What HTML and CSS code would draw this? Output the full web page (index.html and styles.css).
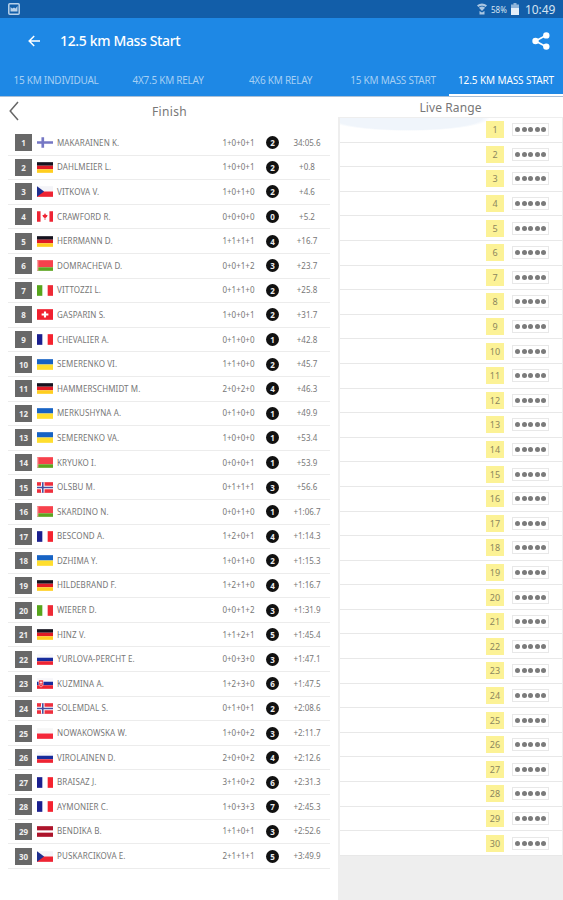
FILE: index.html
```html
<!doctype html>
<html lang="en">
<head>
	<meta charset="utf-8" />
	<title>12.5 km Mass Start</title>
	<link rel="stylesheet" href="styles.css">
</head>
<body>
	<!-- flags -->
	<svg class="defs" width="0" height="0">
		<symbol id="fin" viewBox="0 0 18 12"><path fill="#fff" d="M0 0h18v12H0z"/><path fill="#7577c4" d="M0 4.600h18v2.800H0zM5 0h3v12H5z"/></symbol>
		<symbol id="ger" viewBox="0 0 18 12"><path fill="#15131f" d="M0 0h18v4H0z"/><path fill="#e01b25" d="M0 4h18v4H0z"/><path fill="#ffce1f" d="M0 8h18v4H0z"/></symbol>
		<symbol id="cze" viewBox="0 0 18 12"><path fill="#f4f4f8" d="M0 0h18v6H0z"/><path fill="#ee2433" d="M0 6h18v6H0z"/><path fill="#1f2f8f" d="M0 0l8 6-8 6z"/></symbol>
		<symbol id="can" viewBox="0 0 18 12"><path fill="#fff" d="M0 0h18v12H0z"/><path fill="#ee2433" d="M0 0h4v12H0zM14 0h4v12h-4zM9 2l1 2 2 .5-1 2-1.600 1.200V10h-.8V7.700L7 6.500l-1-2L8 4z"/></symbol>
		<symbol id="blr" viewBox="0 0 18 12"><path fill="#f7414c" d="M0 0h18v8H0z"/><path fill="#5da520" d="M0 8h18v4H0z"/><path fill="#f8a5a5" d="M0 0h1.500v12H0z"/></symbol>
		<symbol id="ita" viewBox="0 0 18 12"><path fill="#fff" d="M0 0h18v12H0z"/><path fill="#57a51c" d="M0 0h6v12H0z"/><path fill="#ee2a36" d="M12 0h6v12h-6z"/></symbol>
		<symbol id="sui" viewBox="0 0 18 12"><path fill="#f0202f" d="M0 0h18v12H0z"/><path fill="#fff" d="M7.800 2.500h2.400v2.300h2.600v2.400h-2.600v2.300H7.800V7.200H5.200V4.800h2.600z"/></symbol>
		<symbol id="fra" viewBox="0 0 18 12"><path fill="#fff" d="M0 0h18v12H0z"/><path fill="#1a1f8f" d="M0 0h6v12H0z"/><path fill="#f5232f" d="M12 0h6v12h-6z"/></symbol>
		<symbol id="ukr" viewBox="0 0 18 12"><path fill="#1763c4" d="M0 0h18v6H0z"/><path fill="#ffde2e" d="M0 6h18v6H0z"/></symbol>
		<symbol id="nor" viewBox="0 0 18 12"><path fill="#ee2f3e" d="M0 0h18v12H0z"/><path fill="#fff" d="M0 4h18v4H0zM4.500 0h4v12h-4z"/><path fill="#434fa0" d="M0 5.100h18v1.800H0zM5.600 0h1.800v12H5.600z"/></symbol>
		<symbol id="rus" viewBox="0 0 18 12"><path fill="#f7f7fa" d="M0 0h18v4H0z"/><path fill="#172c9c" d="M0 4h18v4H0z"/><path fill="#ee2433" d="M0 8h18v4H0z"/></symbol>
		<symbol id="svk" viewBox="0 0 18 12"><path fill="#f7f7fa" d="M0 0h18v4H0z"/><path fill="#172c9c" d="M0 4h18v4H0z"/><path fill="#ee2433" d="M0 8h18v4H0z"/><path fill="#ee2433" stroke="#fff" stroke-width=".6" d="M2 2h5v4.500Q7 9 4.500 10 2 9 2 6.500z"/><path fill="#fff" d="M4.100 3h.8v5h-.8zM3 4.500h3v.8H3z"/></symbol>
		<symbol id="pol" viewBox="0 0 18 12"><path fill="#f7f7f7" d="M0 0h18v6H0z"/><path fill="#f4283a" d="M0 6h18v6H0z"/></symbol>
		<symbol id="lat" viewBox="0 0 18 12"><path fill="#ad142b" d="M0 0h18v12H0z"/><path fill="#fff" d="M0 4.700h18v2.600H0z"/></symbol>
	</svg>

	<div class="status">
		<svg class="status-pic" viewBox="0 0 12 12" width="12" height="12"><rect x=".8" y=".8" width="10.400" height="10.400" rx="1" fill="none" stroke="#b9d2ea" stroke-width="1.500"/><path fill="#b9d2ea" d="M2.500 8.500V4l1.700 1.500L6 4.500l1.500 1 2-2.500v5.500z"/></svg>
		<svg class="status-wifi" viewBox="0 0 10 12" width="10" height="12"><path fill="#a9c6e2" d="M0 2.300Q5-1.500 10 2.300L8.700 4Q5 1.400 1.300 4zM1.900 4.700Q5 2.500 8.100 4.700L5 8zM2.500 8l2.500 1.500L7.500 8v3.500h-5z"/></svg>
		<span class="status-pct">58%</span>
		<svg class="status-bat" viewBox="0 0 8 12" width="8" height="12"><path fill="#8fb5da" d="M2.500 0h3v1.500H8V5H0V1.500h2.500z"/><path fill="#e3eef8" d="M0 5h8v7H0z"/></svg>
		<span class="status-time">10:49</span>
	</div>

	<div class="bar">
		<svg viewBox="0 0 12 12" width="12" height="12"><path fill="none" stroke="#fff" stroke-width="1.500" d="M12 6H1.500M6.200 1L1.200 6l5 5"/></svg>
		<h1>12.5 km Mass Start</h1>
		<svg viewBox="0 0 18 18" width="18" height="18"><path fill="none" stroke="#fff" stroke-width="1.700" d="M14.300 3.300L3.500 9l10.800 5.700"/><circle cx="14.300" cy="3.400" r="3.200" fill="#fff"/><circle cx="3.500" cy="9" r="3.200" fill="#fff"/><circle cx="14.300" cy="14.600" r="3.200" fill="#fff"/></svg>
	</div>
	<ul class="tabs">
		<li><span>15 KM INDIVIDUAL</span></li>
		<li><span>4X7.5 KM RELAY</span></li>
		<li><span>4X6 KM RELAY</span></li>
		<li><span>15 KM MASS START</span></li>
		<li class="active"><span>12.5 KM MASS START</span></li>
	</ul>

	<div class="main">
		<div class="finish">
			<div class="finish-head">
				<svg viewBox="0 0 10 20" width="10" height="20"><path fill="none" stroke="#666" stroke-width="1.500" d="M9 1L1.200 10 9 19"/></svg>
				<h2>Finish</h2>
			</div>
			<ul id="finish-list" class="finish-list"></ul>
		</div>
		<div class="range">
			<h2>Live Range</h2>
			<ul id="range-list" class="range-list"></ul>
		</div>
	</div>

	<script type="text/javascript">
		// flag, name, shooting, time
		var results = [
			["fin", "MAKARAINEN K.", "1+0+0+1", "34:05.6"],
			["ger", "DAHLMEIER L.", "1+0+0+1", "+0.8"],
			["cze", "VITKOVA V.", "1+0+1+0", "+4.6"],
			["can", "CRAWFORD R.", "0+0+0+0", "+5.2"],
			["ger", "HERRMANN D.", "1+1+1+1", "+16.7"],
			["blr", "DOMRACHEVA D.", "0+0+1+2", "+23.7"],
			["ita", "VITTOZZI L.", "0+1+1+0", "+25.8"],
			["sui", "GASPARIN S.", "1+0+0+1", "+31.7"],
			["fra", "CHEVALIER A.", "0+1+0+0", "+42.8"],
			["ukr", "SEMERENKO VI.", "1+1+0+0", "+45.7"],
			["ger", "HAMMERSCHMIDT M.", "2+0+2+0", "+46.3"],
			["ukr", "MERKUSHYNA A.", "0+1+0+0", "+49.9"],
			["ukr", "SEMERENKO VA.", "1+0+0+0", "+53.4"],
			["blr", "KRYUKO I.", "0+0+0+1", "+53.9"],
			["nor", "OLSBU M.", "0+1+1+1", "+56.6"],
			["blr", "SKARDINO N.", "0+0+1+0", "+1:06.7"],
			["fra", "BESCOND A.", "1+2+0+1", "+1:14.3"],
			["ukr", "DZHIMA Y.", "1+0+1+0", "+1:15.3"],
			["ger", "HILDEBRAND F.", "1+2+1+0", "+1:16.7"],
			["ita", "WIERER D.", "0+0+1+2", "+1:31.9"],
			["ger", "HINZ V.", "1+1+2+1", "+1:45.4"],
			["rus", "YURLOVA-PERCHT E.", "0+0+3+0", "+1:47.1"],
			["svk", "KUZMINA A.", "1+2+3+0", "+1:47.5"],
			["nor", "SOLEMDAL S.", "0+1+0+1", "+2:08.6"],
			["pol", "NOWAKOWSKA W.", "1+0+0+2", "+2:11.7"],
			["rus", "VIROLAINEN D.", "2+0+0+2", "+2:12.6"],
			["fra", "BRAISAZ J.", "3+1+0+2", "+2:31.3"],
			["fra", "AYMONIER C.", "1+0+3+3", "+2:45.3"],
			["lat", "BENDIKA B.", "1+1+0+1", "+2:52.6"],
			["cze", "PUSKARCIKOVA E.", "2+1+1+1", "+3:49.9"]
		];
		var finish = "", range = "";

		for(var i = 0; i < results.length; i++) {
			var r = results[i];
			var misses = r[2].split("+").reduce(function(a, b) { return a + Number(b); }, 0);
			finish += '<li><b class="place">' + (i + 1) + '</b>' +
				'<svg class="flag"><use href="#' + r[0] + '"/></svg>' +
				'<span class="name">' + r[1] + '</span>' +
				'<span class="shots">' + r[2] + '</span>' +
				'<b class="misses">' + misses + '</b>' +
				'<span class="time">' + r[3] + '</span></li>';
			range += '<li><span class="lane">' + (i + 1) + '</span>' +
				'<span class="targets"><i></i><i></i><i></i><i></i><i></i></span></li>';
		};
		document.getElementById("finish-list").innerHTML = finish;
		document.getElementById("range-list").innerHTML = range;
	</script>
</body>
</html>
```
FILE: styles.css
```css
* {
	margin: 0;
	padding: 0;
	box-sizing: border-box;
}
body {
	width: 563px;
	height: 900px;
	overflow: hidden;
	background-color: #fff;
	font-family: "Noto Sans", "Open Sans", sans-serif;
	color: #777;
}
ul {
	list-style-type: none;
}
svg {
	display: block;
	flex: none;
}
.defs {
	position: absolute;
}
/* status bar */
.status {
	height: 18px;
	padding: 0 7px 0 8px;
	display: flex;
	align-items: center;
	background-color: #125ea9;
	color: #d5e4f2;
}
.status-pic {
	margin-right: auto;
}
.status-pct {
	width: 18px;
	margin: 0 2px 0 4px;
	font-size: 8px;
	white-space: nowrap;
}
.status-time {
	width: 31px;
	margin-left: 6px;
	font-size: 12px;
	letter-spacing: -0.1px;
	white-space: nowrap;
}
/* title */
.bar {
	height: 46px;
	padding: 0 13px 0 28px;
	display: flex;
	align-items: center;
	background-color: #1e88e5;
}
.bar h1 {
	flex: 1;
	padding-left: 20px;
	font-size: 14px;
	font-weight: 500;
	line-height: 20px;
	letter-spacing: -0.35px;
	color: #fff;
}
.tabs {
	height: 33px;
	display: grid;
	grid-template-columns: 112px 112px 113px 112px 114px;
	background-color: #1e88e5;
	border-bottom: 1px solid #a9bfd6;
}
.tabs li {
	display: flex;
	align-items: center;
	justify-content: center;
	font-size: 10px;
	letter-spacing: -0.25px;
	white-space: nowrap;
	color: #a5cff4;
}
.tabs .active {
	color: #fff;
	border-bottom: 2px solid #fff;
	padding-top: 2px;
	letter-spacing: -0.1px;
}
.main {
	height: 803px;
	display: flex;
}
h2 {
	font-size: 12px;
	font-weight: 400;
	text-align: center;
}
/* finish */
.finish {
	width: 338px;
	padding: 0 8px;
}
.finish-head {
	height: 34px;
	display: flex;
	align-items: center;
	padding: 0 0 6px 1px;
}
.finish-head h2 {
	flex: 1;
	padding-right: 10px;
	letter-spacing: 0.3px;
}
.finish-list li {
	height: 24.6px;
	padding-left: 7px;
	display: flex;
	align-items: center;
	border-bottom: 1px solid #ececec;
	font-size: 8px;
	line-height: 10px;
	white-space: nowrap;
}
.finish-list li > * {
	flex: none;
}
.place {
	width: 17px;
	height: 17px;
	text-align: center;
	line-height: 17px;
	background-color: #686868;
	color: #eee;
}
.flag {
	width: 16px;
	height: 11px;
	margin: 0 4px 0 5px;
}
.name {
	width: 161px;
	letter-spacing: 0.1px;
}
.shots {
	width: 41px;
	text-align: center;
}
.misses {
	width: 13px;
	height: 13px;
	margin-left: 7px;
	border-radius: 50%;
	text-align: center;
	line-height: 13px;
	background-color: #111;
	color: #eee;
}
.time {
	width: 51px;
	padding-left: 5px;
	text-align: center;
}
/* live range */
.range {
	width: 225px;
	background-color: #eee;
}
.range h2 {
	height: 20px;
	line-height: 21px;
	letter-spacing: 0.1px;
	background-color: #fff;
}
.range-list {
	padding: 1px 1px 0 2px;
}
.range-list li {
	height: 24.6px;
	padding-left: 146px;
	display: flex;
	align-items: center;
	background-color: #fff;
	border-bottom: 1px solid #e8e8e8;
}
.range-list li:first-child {
	background: radial-gradient(ellipse 82px 13px at 68px 0, #f0f5fb 90%, #fff);
}
.lane {
	width: 18px;
	height: 17px;
	text-align: center;
	font-size: 9px;
	line-height: 17px;
	background-color: #fcf296;
	color: #8c875e;
}
.targets {
	width: 37px;
	height: 13px;
	margin-left: 8px;
	display: flex;
	align-items: center;
	justify-content: center;
	gap: 1.5px;
	border: 1px solid #e8e8e8;
}
.targets i {
	width: 5px;
	height: 5px;
	border-radius: 50%;
	background-color: #7b7b7b;
}
```
